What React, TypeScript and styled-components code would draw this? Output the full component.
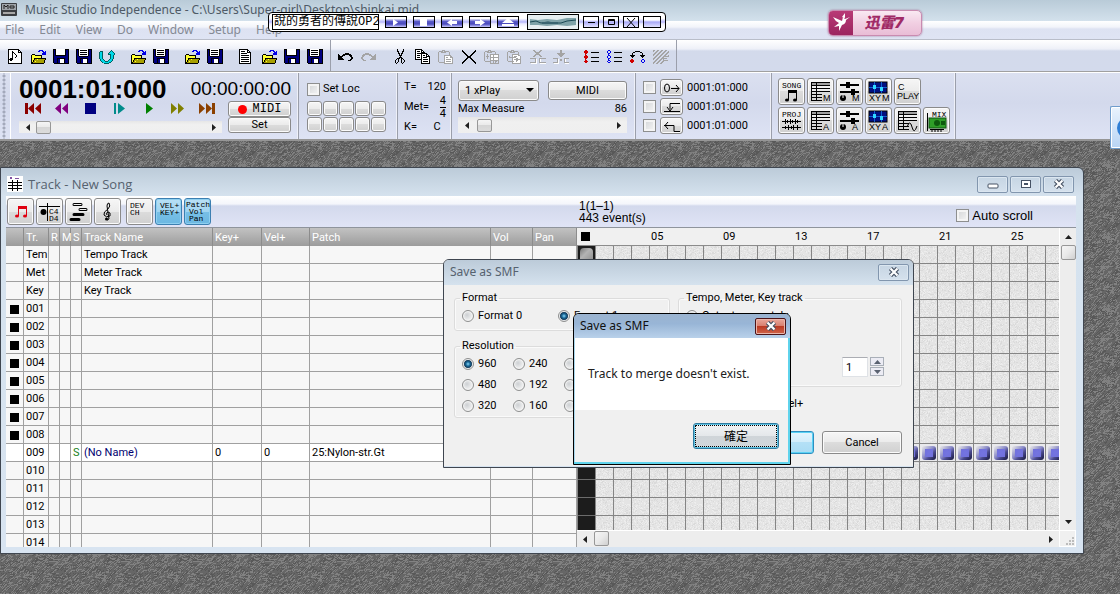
import React from "react";
import styled, { createGlobalStyle, css } from "styled-components";

const uiFont = `Roboto, "Noto Sans CJK TC", sans-serif`;
const titleFont = `"Noto Sans", "Noto Sans CJK TC", sans-serif`;

const GlobalStyle = createGlobalStyle`
  *, *::before, *::after { box-sizing: border-box; }
  body { margin: 0; overflow: hidden; font: 11px/16px ${uiFont}; color: #000; }
  button, input, select { font: inherit; color: inherit; margin: 0; padding: 0; }
`;

/* ---------- textures ---------- */

type Layer = { color: string; count: number; max: number };

function scatter(size: number, count: number, max: number, seed: number) {
  let s = seed;
  const next = (n: number) => {
    s = (s * 1103515245 + 12345) % 2147483648;
    return Math.floor((s / 2147483648) * n);
  };
  let d = "";
  for (let i = 0; i < count; i++) {
    const x = next(size);
    const y = next(size);
    const len = 1 + next(max);
    if (max > 1 && next(3) > 0) {
      for (let k = 0; k < len; k++) d += `M${x + k} ${y - k}h1v1h-1z`;
    } else {
      d += `M${x} ${y}h${len}v1h-${len}z`;
    }
  }
  return d;
}

const TextureSvg = styled.svg`
  position: absolute;
  inset: 0;
  width: 100%;
  height: 100%;
  display: block;
`;

function Texture({ id, base, layers }: { id: string; base: string; layers: Layer[] }) {
  return (
    <TextureSvg aria-hidden="true" shapeRendering="crispEdges">
      <defs>
        <pattern id={id} width="72" height="72" patternUnits="userSpaceOnUse">
          <rect width="72" height="72" fill={base} />
          {layers.map((l, i) => (
            <path key={i} d={scatter(72, l.count, l.max, 77 + i * 991)} fill={l.color} />
          ))}
        </pattern>
      </defs>
      <rect width="100%" height="100%" fill={`url(#${id})`} />
    </TextureSvg>
  );
}

/* ---------- application frame ---------- */

const AppFrame = styled.div`
  position: relative;
  height: 100vh;
  min-height: 480px;
  display: flex;
  flex-direction: column;
  overflow: hidden;
`;

const TitleBar = styled.header`
  display: flex;
  align-items: center;
  gap: 8px;
  height: 21px;
  padding: 0 0 2px 1px;
  background: linear-gradient(#b9cbd8, #d3e1ec);
  font: 12px/16px ${titleFont};
  color: #4e5a66;
  white-space: nowrap;
`;

const MenuBar = styled.nav`
  display: flex;
  align-items: center;
  gap: 15px;
  height: 19px;
  padding-left: 5px;
  background: linear-gradient(#fff, #f2f4fa 6px, #dde2f2 8px, #dfe4f4);
  border-bottom: 1px solid #b9bdc9;
`;

const MenuItem = styled.button`
  border: 0;
  background: none;
  font: 12px/16px ${titleFont};
  color: #858a94;
`;

const Toolbar = styled.div`
  display: flex;
  height: 32px;
  background: linear-gradient(#fff, #eef0f8 9px, #d3daeb 11px, #d3daec);
  border-bottom: 1px solid #a0a0a0;
`;

const ToolGroup = styled.div`
  display: flex;
  align-items: center;
  gap: 8px;
  padding: 2px 4px 0 3px;
  border-right: 1px solid #9b9fab;
`;

const ToolSet = styled.div`
  display: flex;
`;

const ToolButton = styled.button`
  width: 23px;
  height: 24px;
  display: grid;
  place-items: center;
  border: 0;
  background: none;
`;

const ControlBar = styled.div`
  display: flex;
  height: 69px;
  background: linear-gradient(#dbe0f0, #d3d9ec 30px, #dee3f4);
  border-top: 1px solid #fff;
  border-bottom: 2px solid #969696;
`;

const Grip = styled.div`
  width: 11px;
  border-right: 1px solid #fff;
  background: radial-gradient(circle at 2px 2px, #a3a9bb 1px, transparent 2px) 2px 1px / 4px 4px repeat-y;
`;

const Section = styled.section<{ $w: number; $pad?: string; $gap?: number }>`
  width: ${(p) => p.$w}px;
  flex: none;
  display: flex;
  flex-direction: column;
  gap: ${(p) => p.$gap ?? 0}px;
  padding: ${(p) => p.$pad ?? "5px 7px"};
  border-right: 1px solid #9b9fab;
  box-shadow: inset -1px 0 #eef0f8;
`;

const Line = styled.div<{ $gap?: number; $between?: boolean }>`
  display: flex;
  align-items: center;
  gap: ${(p) => p.$gap ?? 0}px;
  ${(p) => p.$between && css`justify-content: space-between;`}
`;

const Counter = styled.output`
  font: bold 26px/22px "Liberation Sans", sans-serif;
`;

const Clock = styled.output`
  font: 19px/24px "Liberation Sans", sans-serif;
`;

const raised = css`
  border: 1px solid #8a8a8a;
  border-radius: 3px;
  background: linear-gradient(#f6f6f6, #ebebeb 50%, #dcdcdc 50%, #d0d0d0);
  box-shadow: inset 0 0 0 1px #fbfbfb;
`;

const PushButton = styled.button<{ $w: number; $h: number; $primary?: boolean; $mono?: boolean }>`
  ${raised}
  width: ${(p) => p.$w}px;
  height: ${(p) => p.$h}px;
  display: flex;
  align-items: center;
  justify-content: center;
  gap: 6px;
  flex: none;
  ${(p) => p.$mono && css`font: 12px/12px "Liberation Mono", monospace;`}
  ${(p) =>
    p.$primary &&
    css`
      border-color: #2f8fc0;
      background: linear-gradient(#e4f5fd, #d0ecfa 50%, #b4e0f6 50%, #a9dcf4);
      box-shadow: inset 0 0 0 1px #5ad2f5;
    `}
`;

const RecordDot = styled.span`
  width: 9px;
  height: 9px;
  border-radius: 50%;
  background: #f00;
`;

const Transport = styled.div`
  display: flex;
  flex-direction: column;
  width: 203px;
`;

const TransportRow = styled.div`
  display: flex;
  justify-content: space-between;
  padding: 0 5px 0 4px;
  height: 20px;
`;

const TransportButton = styled.button`
  display: grid;
  place-items: center;
  width: 20px;
  height: 14px;
  border: 0;
  background: none;
`;

const Slider = styled.div<{ $h: number }>`
  display: flex;
  align-items: center;
  height: ${(p) => p.$h}px;
  background: linear-gradient(#e6e6e6, #f0f0f0 30%, #efefef);
`;

const ArrowButton = styled.button`
  width: 17px;
  height: 100%;
  flex: none;
  display: grid;
  place-items: center;
  border: 0;
  background: none;
`;

const Range = styled.input`
  appearance: none;
  flex: 1;
  min-width: 0;
  height: 100%;
  background: none;
  &::-webkit-slider-thumb {
    appearance: none;
    width: 15px;
    height: 13px;
    border: 1px solid #979797;
    border-radius: 2px;
    background: linear-gradient(#f5f5f5, #e9e9e9 50%, #d6d6d6 50%, #dcdcdc);
  }
`;

const CheckBox = styled.input`
  appearance: none;
  width: 13px;
  height: 13px;
  flex: none;
  border: 1px solid #8e8f8f;
  background: linear-gradient(135deg, #d2d4d6, #f6f6f6);
  box-shadow: inset 0 0 0 2px #f4f4f4;
`;

const CheckLabel = styled.label<{ $wide?: boolean }>`
  display: flex;
  align-items: center;
  gap: 3px;
  white-space: nowrap;
  ${(p) => p.$wide && css`font: 13px/16px "Liberation Sans", sans-serif;`}
`;

const LocGrid = styled.div`
  display: grid;
  grid-template-columns: repeat(5, 15px);
  gap: 1px;
`;

const LocButton = styled.button`
  ${raised}
  height: 15px;
`;

const Meter = styled(Line)`
  height: 24px;
`;

const Fraction = styled.span`
  display: flex;
  flex-direction: column;
  align-items: center;
  line-height: 12px;
  span:first-child {
    border-bottom: 1px solid #000;
  }
`;

const SelectBox = styled.div`
  position: relative;
  &::after {
    content: "";
    position: absolute;
    right: 5px;
    top: 8px;
    border: 4px solid transparent;
    border-top-color: #000;
    pointer-events: none;
  }
`;

const Select = styled.select`
  ${raised}
  appearance: none;
  width: 81px;
  height: 21px;
  padding-left: 6px;
`;

const PanelGrid = styled.div`
  display: grid;
  grid-template-columns: repeat(6, 27px);
  gap: 2px;
`;

const IconButton = styled.button<{ $on?: boolean }>`
  ${raised}
  width: 27px;
  height: 27px;
  display: grid;
  place-items: center;
  ${(p) =>
    p.$on &&
    css`
      border-color: #3c7fb1;
      background: linear-gradient(#b9e0f5, #a0d4f0 50%, #78bfe6 50%, #6cb8e2);
      box-shadow: inset 0 0 0 1px #8fd0f0;
    `}
  svg text {
    font: 8px "Liberation Mono", monospace;
  }
  svg text.wide {
    font: 9px "Liberation Sans", sans-serif;
  }
`;

/* ---------- workspace and the track window ---------- */

const Workspace = styled.main`
  position: relative;
  flex: 1;
  min-height: 0;
  display: flex;
  padding: 26px 36px 40px 0;
`;

const TrackWindow = styled.section`
  position: relative;
  flex: 1;
  min-width: 0;
  display: flex;
  flex-direction: column;
  padding: 0 7px 6px 5px;
  border: 1px solid #3f4650;
  border-radius: 0 6px 0 0;
  background: linear-gradient(#bccbd9, #d5e2ee 28px, #d8e4f1);
`;

const WindowTitle = styled.div`
  display: flex;
  align-items: center;
  gap: 5px;
  height: 28px;
  padding: 4px 2px 0 1px;
  font: 13px/16px "Open Sans", sans-serif;
  color: #56626f;
`;

const WindowButtons = styled.div`
  display: flex;
  gap: 2px;
  margin-left: auto;
`;

const CaptionButton = styled.button<{ $danger?: boolean }>`
  width: 31px;
  height: 17px;
  display: grid;
  place-items: center;
  border: 1px solid #8296ae;
  border-radius: 2px;
  background: linear-gradient(#c6d5e3, #d5e1ed);
  box-shadow: inset 0 0 0 1px #dbe6f0;
  ${(p) =>
    p.$danger &&
    css`
      border-color: #4d1418;
      background: linear-gradient(#e9a79b, #d98070 45%, #bb3a24 50%, #d0654a);
      box-shadow: inset 0 0 0 1px #eab5aa;
    `}
`;

const TrackTools = styled.div`
  display: flex;
  align-items: center;
  height: 31px;
  padding: 0 43px 0 1px;
  background: linear-gradient(#fff, #f4f6fb 8px, #d3d9ec 10px, #e0e4f6);
`;

const TrackToolSet = styled.div<{ $w: number }>`
  display: flex;
  gap: 2px;
  width: ${(p) => p.$w}px;
`;

const EventInfo = styled.div`
  flex: 1;
  line-height: 12px;
  white-space: pre-line;
  font-family: "Liberation Sans", sans-serif;
  font-size: 12px;
`;

const ScrollOption = styled.div`
  padding-top: 8px;
`;

const Panes = styled.div`
  flex: 1;
  min-height: 0;
  display: flex;
  overflow: hidden;
  border-top: 1px solid #8f949c;
  background: #f0f0f0;
`;

const ListPane = styled.div`
  flex: none;
  width: 571px;
  overflow: hidden;
  background: #f7f7f7;
`;

const TrackTable = styled.table`
  width: 100%;
  table-layout: fixed;
  border-collapse: separate;
  border-spacing: 0;
  white-space: nowrap;
`;

const HeadCell = styled.th`
  height: 18px;
  padding: 1px 0 0 2px;
  border-right: 1px solid #8c8c8c;
  background: linear-gradient(#c2c2c2, #9c9c9c);
  color: #fff;
  font-weight: normal;
  text-align: left;
  line-height: 16px;
`;

const Cell = styled.td<{ $color?: string; $active?: boolean }>`
  height: 18px;
  padding: 1px 0 0 2px;
  border-right: 1px solid #a0a0a0;
  border-bottom: 1px solid #a0a0a0;
  background: ${(p) => (p.$active ? "#fff" : "#f7f7f7")};
  color: ${(p) => p.$color ?? "#000"};
  line-height: 16px;
`;

const ActiveMark = styled.span`
  display: block;
  width: 9px;
  height: 9px;
  margin-left: 2px;
  background: #000;
`;

const GridPane = styled.div`
  flex: 1;
  min-width: 0;
  display: flex;
  flex-direction: column;
`;

const GridBody = styled.div`
  flex: 1;
  min-height: 0;
  display: flex;
`;

const Measures = styled.div`
  flex: 1;
  min-width: 0;
  display: flex;
  flex-direction: column;
`;

const Ruler = styled.div`
  display: flex;
  height: 18px;
  overflow: hidden;
  padding-top: 1px;
  border-bottom: 1px solid #8c8c8c;
  span {
    flex: none;
    width: 72px;
    padding-left: 2px;
  }
`;

const RulerMark = styled.i`
  display: block;
  width: 9px;
  height: 9px;
  margin: 3px 0 0 2px;
  background: #000;
`;

const GridArea = styled.div`
  position: relative;
  flex: 1;
  overflow: hidden;
`;

const GridLines = styled.div`
  position: absolute;
  inset: 0;
  background:
    linear-gradient(90deg, transparent 17px, #858585 17px) 1px 0 / 18px 18px,
    linear-gradient(transparent 17px, #858585 17px) 0 0 / 18px 18px;
`;

const CursorColumn = styled.div`
  position: absolute;
  left: 1px;
  top: 0;
  bottom: 0;
  width: 17px;
  overflow: hidden;
  background: linear-gradient(transparent 17px, #6c6c6c 17px) 0 0 / 18px 18px, #1c1c1c;
`;

const CursorBlock = styled.div`
  width: 13px;
  height: 15px;
  margin: 2px;
  border-radius: 4px 4px 0 0;
  background: linear-gradient(135deg, #777, #b4b4b4 40%, #8a8a8a);
`;

const ClipRow = styled.div`
  position: absolute;
  left: 19px;
  right: 0;
  top: 198px;
  display: flex;
  overflow: hidden;
`;

const Clip = styled.div`
  flex: none;
  width: 18px;
  height: 17px;
  border-right: 1px solid #858585;
  background: #e9e9ec;
  padding: 2px 1px 1px 2px;
  &::before {
    content: "";
    display: block;
    width: 14px;
    height: 14px;
    border-radius: 3px;
    background:
      radial-gradient(circle, #7474e0, #7070dc) 3px 3px / 8px 8px no-repeat,
      linear-gradient(135deg, #d8d8e2 10%, #8c8cc8 45%, #4a4a90 65%, #16163a);
  }
`;

const ScrollBar = styled.div<{ $vertical?: boolean }>`
  display: flex;
  flex: none;
  background: #ededed;
  ${(p) =>
    p.$vertical
      ? css`
          flex-direction: column;
          width: 17px;
          border-left: 1px solid #fff;
        `
      : css`
          flex: 1;
          height: 17px;
          border-top: 1px solid #fff;
        `}
`;

const ScrollArrow = styled.button`
  width: 16px;
  height: 17px;
  flex: none;
  display: grid;
  place-items: center;
  border: 0;
  background: none;
`;

const ScrollThumb = styled.div`
  width: 15px;
  height: 15px;
  margin: 0 0 0 1px;
  border: 1px solid #979797;
  border-radius: 2px;
  background: linear-gradient(135deg, #f5f5f5, #e9e9e9 50%, #cfcfcf);
`;

const Spacer = styled.div`
  flex: 1;
`;

const SizeGrip = styled.div`
  width: 17px;
  height: 17px;
  border: 1px solid #fff;
  display: grid;
  place-items: end;
`;

/* ---------- dialogs ---------- */

const Dialog = styled.section`
  position: absolute;
  left: 443px;
  top: 118px;
  width: 471px;
  border: 1px solid #3f4650;
  border-radius: 6px 6px 0 0;
  background: #f0f0f0;
  overflow: hidden;
  box-shadow: inset 0 -1px #d6e3f0;
`;

const DialogTitle = styled.div`
  display: flex;
  align-items: center;
  justify-content: space-between;
  height: 25px;
  padding: 0 4px 1px 6px;
  background: linear-gradient(#bccbd9, #d5e2ee);
  font: 12px/16px ${titleFont};
  color: #56626f;
`;

const DialogBody = styled.form`
  display: grid;
  grid-template-columns: 216px 224px;
  column-gap: 8px;
  padding: 5px 11px 13px 10px;
`;

const Column = styled.div`
  display: flex;
  flex-direction: column;
  gap: 7px;
`;

const Group = styled.fieldset<{ $h: number }>`
  height: ${(p) => p.$h}px;
  min-width: 0;
  margin: 0;
  padding: 2px 7px;
  border: 1px solid #dcdcdc;
  border-radius: 3px;
  box-shadow: inset 0 0 0 1px #fafafa;
  legend {
    padding: 0 2px;
    margin-left: -2px;
  }
`;

const RadioGrid = styled.div<{ $cols: string; $gap?: number }>`
  display: grid;
  grid-template-columns: ${(p) => p.$cols};
  row-gap: ${(p) => p.$gap ?? 5}px;
`;

const RadioLabel = styled.label`
  display: flex;
  align-items: center;
  gap: 4px;
  height: 16px;
  white-space: nowrap;
`;

const Radio = styled.input`
  appearance: none;
  flex: none;
  width: 12px;
  height: 12px;
  border: 1px solid #8e8f8f;
  border-radius: 50%;
  background: radial-gradient(circle at 4px 4px, #cdd0d3, #f4f4f4 6px);
  box-shadow: inset 0 0 0 1px #f4f4f4;
  &:checked {
    background: radial-gradient(circle at 5px 5px, #8fd8f8, #1a6c9c 2px, #0f2f4c 4px, #f4f4f4 5px);
  }
`;

const SpinRow = styled.div`
  display: flex;
  justify-content: flex-end;
  gap: 2px;
  padding: 1px 10px 0 0;
`;

const SpinInput = styled.input`
  width: 26px;
  height: 20px;
  border: 1px solid #dfe2e6;
  border-top-color: #abadb3;
  padding-left: 3px;
  background: #fff;
`;

const SpinButtons = styled.div`
  display: flex;
  flex-direction: column;
  gap: 1px;
`;

const SpinButton = styled.button`
  width: 14px;
  height: 9px;
  display: grid;
  place-items: center;
  border: 1px solid #a9afb8;
  background: #ececf4;
`;

const LevelOption = styled.div`
  display: flex;
  align-items: flex-start;
  padding: 2px 0 0 8px;
  height: 30px;
`;

const DialogButtons = styled.div`
  display: flex;
  justify-content: flex-end;
  gap: 8px;
`;

const MessageBox = styled.section`
  position: absolute;
  left: 573px;
  top: 172px;
  width: 218px;
  border: 1px solid #000;
  border-radius: 6px 6px 0 0;
  background: #f0f0f0;
  overflow: hidden;
  box-shadow: inset -2px -2px #5fd3ec, inset 1px 0 #a9d8ee;
`;

const MessageTitle = styled(DialogTitle)`
  height: 24px;
  padding-bottom: 0;
  background: linear-gradient(#9bb4d0, #98b5d6 40%, #b9d1ea);
  color: #101010;
`;

const MessageText = styled.p`
  margin: 0 2px 0 1px;
  padding: 28px 13px;
  background: #fff;
  font: 12px/16px ${titleFont};
  color: #202020;
  white-space: nowrap;
`;

const MessageFooter = styled.div`
  display: flex;
  justify-content: flex-end;
  padding: 13px 11px 15px;
`;

const OkButton = styled.button`
  width: 86px;
  height: 26px;
  border: 1px solid #2f7ba0;
  border-radius: 3px;
  background: linear-gradient(#f2f4f5, #e4e7ea 50%, #cfd4d8 50%, #d2d8dc);
  box-shadow: inset 0 0 0 1px #5fc3e4;
  outline: 1px dotted #000;
  outline-offset: -3px;
  font: 12px/16px "Noto Sans CJK TC", sans-serif;
`;

/* ---------- overlays ---------- */

const Player = styled.aside`
  position: absolute;
  left: 268px;
  top: 12px;
  width: 398px;
  height: 20px;
  display: flex;
  align-items: center;
  padding: 0 4px 0 3px;
  border: 1px solid #000;
  border-radius: 4px;
  background: linear-gradient(#fff 30%, #b6b6fa 50%, #ececff 60%, #fff 80%);
`;

const PlayerTitle = styled.div`
  width: 109px;
  height: 16px;
  overflow: hidden;
  border: 1px solid #000;
  padding-left: 1px;
  background: #fff;
  font: 12px/14px "Liberation Mono", "Noto Sans CJK TC", monospace;
  white-space: nowrap;
`;

const PlayerKeys = styled.div<{ $gap: number; $ml: number }>`
  display: flex;
  gap: ${(p) => p.$gap}px;
  margin-left: ${(p) => p.$ml}px;
`;

const PlayerKey = styled.button<{ $w: number; $light?: boolean }>`
  width: ${(p) => p.$w}px;
  height: 12px;
  display: grid;
  place-items: center;
  border: 1px solid #000;
  background: ${(p) =>
    p.$light
      ? "linear-gradient(#fff 30%, #a9a9f6 50%, #e2e2ff)"
      : "linear-gradient(#fff 15%, #5858c8 45%, #4a4abc 70%, #c8c8ff)"};
`;

const WaveBox = styled.div`
  width: 52px;
  height: 16px;
  margin-left: 8px;
  border: 1px solid #000;
  background: #e6eef0;
  svg {
    display: block;
  }
`;

const Badge = styled.aside`
  position: absolute;
  left: 828px;
  top: 10px;
  width: 94px;
  height: 26px;
  display: flex;
  border: 1px solid #c98bb0;
  border-radius: 5px;
  overflow: hidden;
  background: linear-gradient(#f9e9f2, #f1cfe2 50%, #e9bdd6);
  box-shadow: 0 0 2px #a06a90;
`;

const BadgeLogo = styled.div`
  width: 24px;
  background: linear-gradient(#b83a76, #9c2560);
`;

const BadgeName = styled.span`
  flex: 1;
  padding-right: 6px;
  text-align: center;
  font: italic 900 15px/23px Inter, "Noto Sans CJK SC", sans-serif;
  color: #a02a66;
`;

const SideTab = styled.aside`
  position: absolute;
  right: 0;
  top: 106px;
  width: 10px;
  height: 43px;
  overflow: hidden;
  border: 1px solid #6f9ccc;
  border-right: 0;
  border-radius: 2px 0 0 2px;
  background: linear-gradient(#eaf3fd, #b8d4f4);
  box-shadow: inset 1px 1px #fff, inset 0 -1px #fff;
  &::before {
    content: "";
    position: absolute;
    left: 6px;
    top: 10px;
    width: 22px;
    height: 22px;
    border-radius: 50%;
    background: #2f7fd6;
  }
`;

/* ---------- drawings ---------- */

const palette: Record<string, string> = {
  k: "#000", w: "#fff", b: "#000080", B: "#0000e8", y: "#ffff30", o: "#a8a000",
  g: "#a4a4a4", c: "#00d8e8", t: "#006060", r: "#d00000",
};

function Pixels({ rows }: { rows: string[] }) {
  const w = Math.max(...rows.map((r) => r.length));
  const paths: Record<string, string> = {};
  rows.forEach((row, y) => {
    for (let x = 0; x < row.length; ) {
      const ch = row[x];
      let n = 1;
      while (row[x + n] === ch) n++;
      if (palette[ch]) paths[ch] = (paths[ch] ?? "") + `M${x} ${y}h${n}v1h-${n}z`;
      x += n;
    }
  });
  return (
    <svg width={w} height={rows.length} shapeRendering="crispEdges" aria-hidden="true">
      {Object.entries(paths).map(([ch, d]) => (
        <path key={ch} d={d} fill={palette[ch]} />
      ))}
    </svg>
  );
}

const art: Record<string, string[]> = {
  newSong: [
    "kkkkkkkkkkk...", "kwwwwwwwwwkk..", "kwwwkwwwwwkwk.", "kwwwkkwwwwkkkk", "kwwwkwkwwwwwwk",
    "kwwwkwwkwwwwwk", "kwwwkwwwkwwwwk", "kwwwkwwwkwwwwk", "kwwwkwwkwwwwwk", "kwkkkwwwwwwwwk",
    "kkkkkwwwwwwwwk", "kwkkwwwwwwwwwk", "kwwwwwwwwwwwwk", "kwwwwwwwwwwwwk", "kkkkkkkkkkkkkk",
  ],
  open: [
    ".........BBBB...", "........BB..BB.B", ".............BBB", "............BBBB", "..kkk.......BBBB",
    ".kyyykkkkkkk....", ".kyyyyyyyyyk....", ".kyyyyyyyyyk....", ".kyykkkkkkkkkkkk", ".kyykooyoooooook",
    ".kykooooooooook.", ".kykoyooooooook.", ".kkoooooooooook.", ".kkkkkkkkkkkkk..",
  ],
  save: [
    "kkkwwwwwwwwwkkkk", "kbkwwwwwwwwwkbbk", "kbkwwwwwwwwwkbbk", "kbkwwwwwwwwwkbbk", "kbkwwwwwwwwwkbbk",
    "kbkwwwwwwwwwkbbk", "kbkkkkkkkkkkkbbk", "kbbbbbbbbbbbbbbk", "kbbbbbbbbbbbbbbk", "kbbbkkkkkkkkbbbk",
    "kbbbkbbwwwwkbbbk", "kbbbkbbwwwwkbbbk", "kbbbkbbwwwwkbbbk", "kbbbkbbwwwwkbbbk", ".kkkkkkkkkkkkkkk",
  ],
  saveList: [
    "kkkwwwwwwwwwkkkk", "kbkwkkkkkkkwkbbk", "kbkwwwwwwwwwkbbk", "kbkwkkkkkkkwkbbk", "kbkwwwwwwwwwkbbk",
    "kbkwkkkkkkkwkbbk", "kbkwwwwwwwwwkbbk", "kbbkkkkkkkkkbbbk", "kbbbbbbbbbbbbbbk", "kbbbkkkkkkkkbbbk",
    "kbbbkbbwwwwkbbbk", "kbbbkbbwwwwkbbbk", "kbbbkbbwwwwkbbbk", "kbbbkbbwwwwkbbbk", ".kkkkkkkkkkkkkkk",
  ],
  revert: [
    "............t...", ".ttt.......tct..", "tcct......tccct.", "tcct.....tccccct", "tcct.....tttccct",
    "tcct.......tcct.", "tcct.......tcct.", "tcct.......tcct.", "tcct.......tcct.", ".tcct.....tcct..",
    ".tccct...tccct..", "..tccctttccct...", "...tcccccctt....", ".....ttttt......",
  ],
  text: [
    "kkkkkkkkk....", "kwwwwwwwkk...", "kwkkkkwwkwk..", "kwwwwwwwkkkk.", "kwkkkkkkwwwk.", "kwwwwwwwwwwk.",
    "kwkkkkkkkkwk.", "kwwwwwwwwwwk.", "kwkkkkkkkkwk.", "kwwwwwwwwwwk.", "kwkkkkkkkkwk.", "kwwwwwwwwwwk.",
    "kwkkkkkkkkwk.", "kwwwwwwwwwwk.", "kkkkkkkkkkkk.",
  ],
  undo: [
    ".......kkkk....", "k....kkkkkkkk..", "kk..kkk....kkk.", "kkkkk.......kk.", "kkkk.........kk",
    "kkkkk........kk", "kkkkkk......kk.", "..........kkk..",
  ],
  redo: [
    "....gggg.......", "..gggggggg....g", ".ggg....ggg..gg", ".gg.......ggggg", "gg.........gggg",
    "gg........ggggg", ".gg......gggggg", "..ggg..........",
  ],
  cut: [
    "..k.....k", "..k.....k", "..kk...kk", "...k...k.", "...kk.kk.", "....k.k..", "....kkk..", ".....k...",
    "....kkk..", "..kkk.kk.", ".k.k..k.k", "k..k..k..k", "k..k..k..k", "k.k...k.k.", ".k.....k..",
  ],
  copy: [
    "kkkkkkk.........", "kwwwwwkk........", "kwkkkwkwk.......", "kwwwwwkkkk......", "kwkkkkkkkkkk....",
    "kwwwwwkwwwwkk...", "kwkkkwkwkkwkwk..", "kwwwwwkwwwwkkkk.", "kwkkkwkwkkkkwwk.", "kwwwwwkwwwwwwwk.",
    "kkkkkkkwkkkkkwk.", "......kwwwwwwwk.", "......kwkkkkkwk.", "......kwwwwwwwk.", "......kkkkkkkkk.",
  ],
  paste: [
    "....ggg.........", ".gggg.ggggg.....", "g..ggggg...g....", "g..........g....", "g..........g....",
    "g.....ggggggg...", "g.....gwwwwwgg..", "g.....gwggwwggg.", "g.....gwwwwwwwg.", "g.....gwgggggwg.",
    "g.....gwwwwwwwg.", "g.....gwgggggwg.", ".ggggggwwwwwwwg.", "......ggggggggg.",
  ],
  remove: [
    "k............k", "kk..........kk", ".kk........kk.", "..kk......kk..", "...kk....kk...", "....kk..kk....",
    ".....kkkk.....", ".....kkkk.....", "....kk..kk....", "...kk....kk...", "..kk......kk..", ".kk........kk.",
    "kk..........kk", "k............k",
  ],
  insert: [
    "....ggg.........", ".gggg.ggggg.....", "g..ggggg...g....", "g..........g....", "g..g..ggggggggg.",
    "g..g..gwwgwwwwg.", "g.ggg.gwwgwwwwg.", "g..g..ggggggggg.", "g..g..gwwgwwwwg.", "g.....gwwgwwwwg.",
    "g.....ggggggggg.", ".gggggg..g.gg.g.", "......g..g.g..g.", "......ggggggggg.",
  ],
  pasteTo: [
    "....ggg.........", ".gggg.ggggg.....", "g..ggggg...g....", "g..........g....", "g....ggggggg....",
    "g....gwwwwwgg...", "g.g..gwgggwwwg..", "g.gggggggwwwwg..", "g....gwwwggwwg..", "g....gwggggggg..",
    "g....gwwwggwwg..", ".ggggggwwgwwwg..", ".....gwwwwwwwg..", ".....ggggggggg..",
  ],
  deleteBar: [
    "...gg.....gg....", "....gg...gg.....", ".....ggggg......", "......ggg.......", ".....ggggg......",
    "....gg...gg.....", "...gg.....gg....", "................", "gggggg...ggggggg", ".....gw..gw.....",
    ".....gw..gw.....", ".....gw..gw.....", "ggggggw..ggggggg", ".wwwwww...wwwwww",
  ],
  insertBar: [
    ".......gg.......", ".......gg.......", ".......gg.......", "....gggggggg....", ".....gggggg.....",
    "......gggg......", ".......gg.......", "................", "ggggg......ggggg", "....gw.gg..gw...",
    "....gw.gg..gw...", "....gw.....gw...", "gggggw.....ggggg", ".wwwww......wwww",
  ],
  listRed: [
    ".rr............", "rrrr...........", "rrrr...kkkkkkkk", ".rr............", ".r.............", ".rr............",
    "rrrr...........", "rrrr...kkkkkkkk", ".rr............", ".r.............", ".rr............", "rrrr...kkkkkkkk",
    ".rr............",
  ],
  listBlue: [
    ".BB............", "B..B...........", "B..B...kkkkkkkk", ".BB............", ".B.............", ".BB............",
    "B..B...........", "B..B...kkkkkkkk", ".BB............", ".B.............", ".BB............", "B..B...kkkkkkkk",
    ".BB............",
  ],
  swap: [
    ".....kkkkk......", "...kk.....kk....", "..k.........k...", "..k.........k...", "kkkkk.....kkkkk.",
    ".kkk.......kkk..", "..k.........k...", "................", ".rr.........BB..", "rrrr.......B..B.",
    "rrrr.......B..B.", ".rr.........BB..",
  ],
  shade: [
    "gg..gg..gg..gg..", "g..gg..gg..gg..g", "..gg..gg..gg..gg", ".gg..gg..gg..gg.", "gg..gg..gg..gg..",
    "g..gg..gg..gg..g", "..gg..gg..gggggg", ".gg..gg..gg.....", "gg..gg..gggggg..", "g..gg..gg.g.....",
    "..gg..gg..ggggg.", ".gg..gg..gg.....", "gg..gg..gg......", "g..gg..gg.......",
  ],
};

type Tool = { name: string; icon: string };
const fileTools: Tool[][] = [
  [["New", "newSong"], ["Open", "open"], ["Save", "save"], ["Save list", "saveList"], ["Revert", "revert"]],
  [["Open project", "open"], ["Save project", "saveList"]],
  [["Open set", "open"], ["Save set", "saveList"]],
  [["Text", "text"], ["Open text", "open"], ["Save text", "save"], ["Save text list", "saveList"]],
].map((g) => g.map(([name, icon]) => ({ name, icon })));
const editTools: Tool[][] = [
  [["Undo", "undo"], ["Redo", "redo"]],
  [["Cut", "cut"], ["Copy", "copy"], ["Paste", "paste"], ["Delete", "remove"], ["Insert paste", "insert"],
    ["Paste to", "pasteTo"], ["Delete measures", "deleteBar"], ["Insert measures", "insertBar"]],
  [["Mark all", "listRed"], ["Unmark all", "listBlue"], ["Invert marks", "swap"], ["Shade", "shade"]],
].map((g) => g.map(([name, icon]) => ({ name, icon })));

function Tools({ sets }: { sets: Tool[][] }) {
  return (
    <ToolGroup>
      {sets.map((set, i) => (
        <ToolSet key={i}>
          {set.map((t) => (
            <ToolButton key={t.name} aria-label={t.name}>
              <Pixels rows={art[t.icon]} />
            </ToolButton>
          ))}
        </ToolSet>
      ))}
    </ToolGroup>
  );
}

const transport = [
  { name: "To start", color: "#8b0000", d: "M0 0h3v11h-3zM9 0v11l-6-5.5zM16 0v11l-6-5.5z" },
  { name: "Rewind", color: "#800080", d: "M7 0v11l-6-5.5zM14 0v11l-6-5.5z" },
  { name: "Stop", color: "#000080", d: "M2 0h11v11h-11z" },
  { name: "Step", color: "#008b8b", d: "M2 0h2v11h-2zM6 0v11l7-5.5z" },
  { name: "Play", color: "#008000", d: "M5 0v11l7-5.5z" },
  { name: "Forward", color: "#808000", d: "M1 0v11l6-5.5zM8 0v11l6-5.5z" },
  { name: "To end", color: "#8b4000", d: "M0 0v11l6-5.5zM7 0v11l6-5.5zM13 0h3v11h-3z" },
];

const arrows = { left: "M5 0v7l-4-3.5z", right: "M1 0v7l4-3.5z", up: "M0 5h7l-3.5-4z", down: "M0 1h7l-3.5 4z" };

function Arrow({ to, color = "#202020" }: { to: keyof typeof arrows; color?: string }) {
  const wide = to === "up" || to === "down";
  return (
    <svg width={wide ? 7 : 6} height={wide ? 6 : 7} aria-hidden="true">
      <path d={arrows[to]} fill={color} />
    </svg>
  );
}

function CloseGlyph() {
  return (
    <svg width="12" height="10" aria-hidden="true">
      <path d="M2.500 1.500L9.500 8.500M9.500 1.500L2.500 8.500" stroke="#465264" strokeWidth="4.500" />
      <path d="M2.500 1.500L9.500 8.500M9.500 1.500L2.500 8.500" stroke="#fff" strokeWidth="2.200" />
    </svg>
  );
}

function ListArt({ letter }: { letter?: string }) {
  return (
    <svg width="25" height="25" aria-hidden="true">
      <rect x="3" y="3" width="19" height="3" fill="#a0a0a0" />
      <path
        d="M3 3.500h19M3 6.500h19M3 9.500h19M3 12.500h19M3 15.500h11M3 18.500h11M3 21.500h11M3.500 3v19M8.500 3v19"
        stroke="#000"
        fill="none"
        shapeRendering="crispEdges"
      />
      {letter ? <text className="wide" x="15" y="22">{letter}</text> : <path d="M12 19q3-8 5 0t5-1" stroke="#000" fill="none" />}
    </svg>
  );
}

function FaderArt({ letter }: { letter: string }) {
  return (
    <svg width="25" height="25" aria-hidden="true">
      <path d="M3 6h19M3 13h19" stroke="#000" strokeWidth="2" shapeRendering="crispEdges" />
      <path d="M9 3h4v6h-4zM14 10h4v6h-4z" />
      <circle cx="6" cy="19" r="3" />
      <path d="M6 19v-3" stroke="#fff" />
      <text className="wide" x="15" y="22">{letter}</text>
    </svg>
  );
}

function XYArt({ letter }: { letter: string }) {
  return (
    <svg width="25" height="25" aria-hidden="true">
      <rect x="3" y="3" width="18" height="11" fill="#001080" stroke="#000" />
      <path d="M3 8.500h18M8.500 3v11M15.500 3v11" stroke="#1060d0" />
      <path d="M7 6h3v4h-3zM14 8h3v4h-3z" fill="#30d8ff" />
      <text className="wide" x="3" y="22">XY</text>
      <text className="wide" x="16" y="22">{letter}</text>
    </svg>
  );
}

const Notes = ({ color = "#000", x = 0, y = 0 }: { color?: string; x?: number; y?: number }) => (
  <g transform={`translate(${x} ${y})`} fill={color}>
    <path d="M4 0h9v10h-1v-7h-7v7h-1z" />
    <ellipse cx="3" cy="10" rx="2" ry="1.500" />
    <ellipse cx="11" cy="10" rx="2" ry="1.500" />
  </g>
);

const panelButtons: { name: string; art: React.ReactNode }[] = [
  { name: "Song", art: <svg width="25" height="25"><text x="3" y="9">SONG</text><Notes x={5} y={11} /></svg> },
  { name: "MIDI list", art: <ListArt letter="M" /> },
  { name: "MIDI mixer", art: <FaderArt letter="M" /> },
  { name: "XY MIDI", art: <XYArt letter="M" /> },
  {
    name: "Play C",
    art: <svg width="25" height="25"><text className="wide" x="3" y="11">C</text><text className="wide" x="2" y="20">PLAY</text></svg>,
  },
];

const panelButtons2: { name: string; art: React.ReactNode }[] = [
  {
    name: "Project",
    art: (
      <svg width="25" height="25">
        <text x="3" y="9">PROJ</text>
        <path d="M3 13.500h19M3 19.500h19M6.500 11v5M8.500 12v3M11.500 11v5M13.500 12v3M16.500 11v5M18.500 12v3M6.500 18v3M9.500 17v5M12.500 18v3M14.500 17v5M18.500 17v5" stroke="#000" />
      </svg>
    ),
  },
  { name: "Audio list", art: <ListArt letter="A" /> },
  { name: "Audio mixer", art: <FaderArt letter="A" /> },
  { name: "XY audio", art: <XYArt letter="A" /> },
  { name: "Wave list", art: <ListArt /> },
  {
    name: "Mixer card",
    art: (
      <svg width="25" height="25">
        <rect x="5" y="10" width="17" height="10" fill="#2f9e28" stroke="#115511" />
        <path d="M3.500 5v18M6 21.500h14" stroke="#000" />
        <path d="M8 21v3M11 21v3M14 21v3M17 21v3" stroke="#000" />
        <circle cx="13" cy="15" r="3" fill="#0e5a0e" />
        <path d="M17 13h4v4h-4z" fill="#0e5a0e" />
        <text x="8" y="9">MIX</text>
      </svg>
    ),
  },
];

const trackTools: { name: string; on?: boolean; art: React.ReactNode }[] = [
  { name: "Notes", art: <svg width="25" height="25"><Notes color="#e00010" x={6} y={7} /></svg> },
  {
    name: "Events",
    art: (
      <svg width="25" height="25">
        <path d="M2 7.500h21M10.500 4v18" stroke="#000" shapeRendering="crispEdges" />
        <circle cx="6.500" cy="13" r="3" />
        <text x="12" y="15">C4</text>
        <text x="12" y="22">D4</text>
      </svg>
    ),
  },
  {
    name: "Piano roll",
    art: (
      <svg width="25" height="25">
        <path d="M8 5.500h7M14 10.500h6" stroke="#000" strokeWidth="3" strokeLinecap="round" />
        <path d="M8 5.500h7M14 10.500h6" stroke="#eee" strokeLinecap="round" />
        <path d="M8 15.500h9M5 20.500h8" stroke="#000" strokeWidth="3" strokeLinecap="round" />
      </svg>
    ),
  },
  {
    name: "Score",
    art: (
      <svg width="25" height="25">
        <path d="M11 20q1 2 3 0L12 7q0-3 2-3q2 3-1 6q-5 3-4 6q2 3 6 1q1-4-2-4q-3 1-1 3" stroke="#000" fill="none" />
        <circle cx="11.500" cy="20" r="1.500" />
      </svg>
    ),
  },
];

const trackTools2: typeof trackTools = [
  { name: "Device and channel", art: <svg width="25" height="25"><text x="3" y="9">DEV</text><text x="3" y="16">CH</text></svg> },
  { name: "Velocity and key", on: true, art: <svg width="25" height="25"><text x="4" y="9">VEL+</text><text x="4" y="16">KEY+</text></svg> },
  {
    name: "Patch, volume, pan",
    on: true,
    art: <svg width="25" height="25"><text x="1" y="8">Patch</text><text x="4" y="15">Vol</text><text x="4" y="22">Pan</text></svg>,
  },
];

const columnWidths = [18, 25, 11, 11, 11, 131, 49, 48, 181, 42, 44];
const columnNames = ["", "Tr.", "R", "M", "S", "Track Name", "Key+", "Vel+", "Patch", "Vol", "Pan"];

type Track = { id: string; name?: string; mark?: boolean; solo?: string; key?: string; vel?: string; patch?: string };
const tracks: Track[] = [
  { id: "Tem", name: "Tempo Track" },
  { id: "Met", name: "Meter Track" },
  { id: "Key", name: "Key Track" },
  ...["001", "002", "003", "004", "005", "006", "007", "008"].map((id) => ({ id, mark: true })),
  { id: "009", name: "(No Name)", solo: "S", key: "0", vel: "0", patch: "25:Nylon-str.Gt" },
  ...["010", "011", "012", "013", "014"].map((id) => ({ id })),
];

const locators = [
  { name: "From", d: "M4 3q-2.500 0-2.500 4t2.500 4t2.500-4t-2.500-4M8 7.500h8M13 4l3 3.500l-3 3.500" },
  { name: "Loop in", d: "M17 3.500h-10v6M4 7l3 4l3-4M1 11.500h16" },
  { name: "Loop out", d: "M1 6.500h10v6h6M5 3l-3 3.500l3 3.500" },
];

const playerArrows = ["M7 1l5 3.500l-5 3.500z", "M6 1h7v7h-7z", "M10 1v2h5v3h-5v2l-5-3.500z", "M10 1v2h-5v3h5v2l5-3.500z", "M10 0l6 5h-12zM4 6h12v2h-12z"];
const playerNames = ["Play", "Stop", "Previous", "Next", "Eject"];
const playerFrame = ["M4 4.500h7", "M4.500 1.500h6v5h-6zM4 2.500h7", "M3 0l8 9M11 0l-8 9"];

export default function App() {
  return (
    <AppFrame>
      <GlobalStyle />
      <TitleBar>
        <svg width="16" height="15" aria-hidden="true">
          <rect y="1" width="16" height="13" rx="1" fill="#3b3e42" />
          <rect x="1" y="2" width="14" height="6" fill="#9ea3a8" />
          <path d="M3 3v4M3 3l2 2l2-2v4M9 4h4v2h-4z" stroke="#222" fill="none" />
          <path d="M2 11h12" stroke="#a8a8a8" strokeWidth="2" />
        </svg>
        Music Studio Independence - C:\Users\Super-girl\Desktop\shinkai.mid
      </TitleBar>
      <MenuBar>
        {["File", "Edit", "View", "Do", "Window", "Setup", "Help"].map((m) => (
          <MenuItem key={m}>{m}</MenuItem>
        ))}
      </MenuBar>
      <Toolbar>
        <Tools sets={fileTools} />
        <Tools sets={editTools} />
      </Toolbar>
      <ControlBar>
        <Grip />
        <Section $w={288} $pad="4px 7px 0 8px">
          <Line $between>
            <Counter>0001:01:000</Counter>
            <Clock>00:00:00:00</Clock>
          </Line>
          <Line $gap={6}>
            <Transport>
              <TransportRow>
                {transport.map((t) => (
                  <TransportButton key={t.name} aria-label={t.name}>
                    <svg width="16" height="11" aria-hidden="true"><path d={t.d} fill={t.color} /></svg>
                  </TransportButton>
                ))}
              </TransportRow>
              <Slider $h={12}>
                <ArrowButton aria-label="Back"><Arrow to="left" /></ArrowButton>
                <Range type="range" defaultValue={0} aria-label="Song position" />
                <ArrowButton aria-label="Ahead"><Arrow to="right" /></ArrowButton>
              </Slider>
            </Transport>
            <div>
              <PushButton $w={63} $h={16} $mono><RecordDot />MIDI</PushButton>
              <PushButton $w={63} $h={16}>Set</PushButton>
            </div>
          </Line>
        </Section>
        <Section $w={99} $pad="8px 8px 0" $gap={4}>
          <CheckLabel><CheckBox type="checkbox" />Set Loc</CheckLabel>
          <LocGrid>
            {Array.from({ length: 10 }, (_, i) => (
              <LocButton key={i} aria-label={`Locator ${i + 1}`} />
            ))}
          </LocGrid>
        </Section>
        <Section $w={54} $pad="6px 5px 0 6px">
          <Line $between><span>T=</span><span>120</span></Line>
          <Meter $between><span>Met=</span><Fraction><span>4</span><span>4</span></Fraction></Meter>
          <Line $between><span>K=</span><span>C&nbsp;&nbsp;</span></Line>
        </Section>
        <Section $w={184} $pad="7px 8px 0 6px">
          <Line $between>
            <SelectBox>
              <Select aria-label="Play mode" defaultValue="1"><option value="1">1 xPlay</option></Select>
            </SelectBox>
            <PushButton $w={79} $h={19}>MIDI</PushButton>
          </Line>
          <Line $between><span>Max Measure</span><span>86</span></Line>
          <Slider $h={16}>
            <ArrowButton aria-label="Fewer"><Arrow to="left" /></ArrowButton>
            <Range type="range" defaultValue={2} aria-label="Max measure" />
            <ArrowButton aria-label="More"><Arrow to="right" /></ArrowButton>
          </Slider>
        </Section>
        <Section $w={136} $pad="6px 7px 0" $gap={2}>
          {locators.map((l) => (
            <Line key={l.name} $gap={4}>
              <CheckBox type="checkbox" aria-label={l.name} />
              <PushButton $w={23} $h={17} aria-label={`Set ${l.name}`}>
                <svg width="18" height="14" aria-hidden="true"><path d={l.d} stroke="#000" fill="none" /></svg>
              </PushButton>
              <span>0001:01:000</span>
            </Line>
          ))}
        </Section>
        <Section $w={184} $pad="5px 6px 0" $gap={2}>
          {[panelButtons, panelButtons2].map((set, i) => (
            <PanelGrid key={i}>
              {set.map((b) => (
                <IconButton key={b.name} aria-label={b.name}>{b.art}</IconButton>
              ))}
            </PanelGrid>
          ))}
        </Section>
      </ControlBar>

      <Workspace>
        <Texture
          id="weave"
          base="#666666"
          layers={[{ color: "#828282", count: 820, max: 4 }, { color: "#585858", count: 520, max: 4 }, { color: "#7e7e7e", count: 200, max: 3 }]}
        />
        <TrackWindow>
          <WindowTitle>
            <svg width="16" height="16" aria-hidden="true">
              <rect width="16" height="16" fill="#fff" />
              <path d="M1 6.500h14M1 9.500h14M1 12.500h14M5.500 4v11M10.500 4v11" stroke="#000" shapeRendering="crispEdges" />
              <path d="M3 1h2v2h-2zM8 2h4v1h-4z" fill="#8050a0" />
            </svg>
            Track - New Song
            <WindowButtons>
              <CaptionButton aria-label="Minimize">
                <svg width="12" height="10"><rect x="1" y="5" width="10" height="4" rx="1" fill="#fff" stroke="#465264" /></svg>
              </CaptionButton>
              <CaptionButton aria-label="Maximize">
                <svg width="12" height="10"><rect x="1.500" y="1.500" width="9" height="7" fill="#fff" stroke="#465264" /><rect x="4.500" y="4.500" width="3" height="1" fill="#fff" stroke="#465264" /></svg>
              </CaptionButton>
              <CaptionButton aria-label="Close"><CloseGlyph /></CaptionButton>
            </WindowButtons>
          </WindowTitle>
          <TrackTools>
            <TrackToolSet $w={119}>
              {trackTools.map((t) => (
                <IconButton key={t.name} aria-label={t.name}>{t.art}</IconButton>
              ))}
            </TrackToolSet>
            <TrackToolSet $w={453}>
              {trackTools2.map((t) => (
                <IconButton key={t.name} $on={t.on} aria-label={t.name}>{t.art}</IconButton>
              ))}
            </TrackToolSet>
            <EventInfo>{"1(1–1)\n443 event(s)"}</EventInfo>
            <ScrollOption>
              <CheckLabel $wide><CheckBox type="checkbox" />Auto scroll</CheckLabel>
            </ScrollOption>
          </TrackTools>
          <Panes>
            <ListPane>
              <TrackTable>
                <colgroup>
                  {columnWidths.map((w, i) => <col key={i} width={w} />)}
                </colgroup>
                <thead>
                  <tr>{columnNames.map((n, i) => <HeadCell key={i}>{n}</HeadCell>)}</tr>
                </thead>
                <tbody>
                  {tracks.map((t) => {
                    const active = t.id === "009";
                    return (
                      <tr key={t.id}>
                        <Cell $active={active}>{t.mark && <ActiveMark />}</Cell>
                        <Cell $active={active}>{t.id}</Cell>
                        <Cell $active={active} />
                        <Cell $active={active} />
                        <Cell $active={active} $color="#208020">{t.solo}</Cell>
                        <Cell $active={active} $color={active ? "#000070" : undefined}>{t.name}</Cell>
                        <Cell $active={active}>{t.key}</Cell>
                        <Cell $active={active}>{t.vel}</Cell>
                        <Cell $active={active}>{t.patch}</Cell>
                        <Cell $active={active} />
                        <Cell $active={active} />
                      </tr>
                    );
                  })}
                </tbody>
              </TrackTable>
            </ListPane>
            <GridPane>
              <GridBody>
                <Measures>
                  <Ruler>
                    {["", "05", "09", "13", "17", "21", "25"].map((m) => (
                      <span key={m}>{m || <RulerMark />}</span>
                    ))}
                  </Ruler>
                  <GridArea>
                    <Texture
                      id="grain"
                      base="#e4e4e4"
                      layers={[{ color: "#dadada", count: 1200, max: 1 }, { color: "#ededed", count: 1200, max: 1 }]}
                    />
                    <GridLines />
                    <ClipRow>
                      {Array.from({ length: 85 }, (_, i) => <Clip key={i} />)}
                    </ClipRow>
                    <CursorColumn><CursorBlock /></CursorColumn>
                  </GridArea>
                </Measures>
                <ScrollBar $vertical>
                  <ScrollArrow aria-label="Scroll up"><Arrow to="up" /></ScrollArrow>
                  <ScrollThumb />
                  <Spacer />
                  <ScrollArrow aria-label="Scroll down"><Arrow to="down" /></ScrollArrow>
                </ScrollBar>
              </GridBody>
              <Line>
                <ScrollBar>
                  <ScrollArrow aria-label="Scroll left"><Arrow to="left" /></ScrollArrow>
                  <ScrollThumb />
                  <Spacer />
                  <ScrollArrow aria-label="Scroll right"><Arrow to="right" /></ScrollArrow>
                </ScrollBar>
                <SizeGrip>
                  <svg width="10" height="10"><path d="M7 1h2v2h-2zM4 4h2v2h-2zM7 4h2v2h-2zM1 7h2v2h-2zM4 7h2v2h-2zM7 7h2v2h-2z" fill="#bcbcbc" /></svg>
                </SizeGrip>
              </Line>
            </GridPane>
          </Panes>
        </TrackWindow>

        <Dialog role="dialog" aria-label="Save as SMF">
          <DialogTitle>
            Save as SMF
            <CaptionButton aria-label="Close dialog"><CloseGlyph /></CaptionButton>
          </DialogTitle>
          <DialogBody>
            <Column>
              <Group $h={41}>
                <legend>Format</legend>
                <RadioGrid $cols="96px auto">
                  <RadioLabel><Radio type="radio" name="format" />Format 0</RadioLabel>
                  <RadioLabel><Radio type="radio" name="format" defaultChecked />Format 1</RadioLabel>
                </RadioGrid>
              </Group>
              <Group $h={80}>
                <legend>Resolution</legend>
                <RadioGrid $cols="51px 51px auto">
                  {["960", "240", "120", "480", "192", "96", "320", "160", "48"].map((r) => (
                    <RadioLabel key={r}><Radio type="radio" name="resolution" defaultChecked={r === "960"} />{r}</RadioLabel>
                  ))}
                </RadioGrid>
              </Group>
            </Column>
            <Column>
              <Group $h={97}>
                <legend>Tempo, Meter, Key track</legend>
                <RadioGrid $cols="auto" $gap={16}>
                  <RadioLabel><Radio type="radio" name="tempo" />Output separately</RadioLabel>
                  <RadioLabel><Radio type="radio" name="tempo" defaultChecked />Merge to track</RadioLabel>
                </RadioGrid>
                <SpinRow>
                  <SpinInput aria-label="Track number" defaultValue="1" />
                  <SpinButtons>
                    <SpinButton type="button" aria-label="Increase"><Arrow to="up" color="#5a6270" /></SpinButton>
                    <SpinButton type="button" aria-label="Decrease"><Arrow to="down" color="#5a6270" /></SpinButton>
                  </SpinButtons>
                </SpinRow>
              </Group>
              <LevelOption>
                <CheckLabel><CheckBox type="checkbox" />Apply Key+ or Level+</CheckLabel>
              </LevelOption>
              <DialogButtons>
                <PushButton type="button" $w={80} $h={23} $primary>OK</PushButton>
                <PushButton type="button" $w={80} $h={23}>Cancel</PushButton>
              </DialogButtons>
            </Column>
          </DialogBody>
        </Dialog>

        <MessageBox role="alertdialog" aria-label="Save as SMF message">
          <MessageTitle>
            Save as SMF
            <CaptionButton $danger aria-label="Close message"><CloseGlyph /></CaptionButton>
          </MessageTitle>
          <MessageText>Track to merge doesn't exist.</MessageText>
          <MessageFooter><OkButton>確定</OkButton></MessageFooter>
        </MessageBox>
      </Workspace>

      <Player>
        <PlayerTitle>說的勇者的傳說OP2</PlayerTitle>
        <PlayerKeys $gap={6} $ml={6}>
          {playerArrows.map((d, i) => (
            <PlayerKey key={d} $w={22} aria-label={playerNames[i]}>
              <svg width="20" height="9"><path d={d} fill="#fff" /></svg>
            </PlayerKey>
          ))}
        </PlayerKeys>
        <WaveBox>
          <svg width="50" height="14" aria-hidden="true">
            <path d="M2 4l8 1l9-1l10 1l10-2l9 0v7l-9 1l-10-1l-10 1l-9-1l-8 0z" fill="#7fa3a8" />
            <path d="M2 7l6-1l5 2l7-1l6 1l7 0l6-2l9-1" stroke="#1c4a55" fill="none" />
            <path d="M14 8h16" stroke="#3a6570" strokeWidth="2" />
          </svg>
        </WaveBox>
        <PlayerKeys $gap={4} $ml={4}>
          {playerFrame.map((d, i) => (
            <PlayerKey key={d} $w={16} $light aria-label={["Minimize player", "Maximize player", "Close player"][i]}>
              <svg width="14" height="9"><path d={d} stroke="#000" fill="none" /></svg>
            </PlayerKey>
          ))}
          <PlayerKey $w={18} $light aria-label="Shade player" />
        </PlayerKeys>
      </Player>

      <Badge>
        <BadgeLogo>
          <svg width="24" height="24" aria-hidden="true">
            <path d="M4 6l9 4l1-4l2 2l5-2l-4 3q0 4-4 5l-3 6l0-5l-5 1l5-4q-4-2-6-6zM16 7l0-5l-3 4z" fill="#fff" />
          </svg>
        </BadgeLogo>
        <BadgeName>迅雷7</BadgeName>
      </Badge>
      <SideTab />
    </AppFrame>
  );
}
